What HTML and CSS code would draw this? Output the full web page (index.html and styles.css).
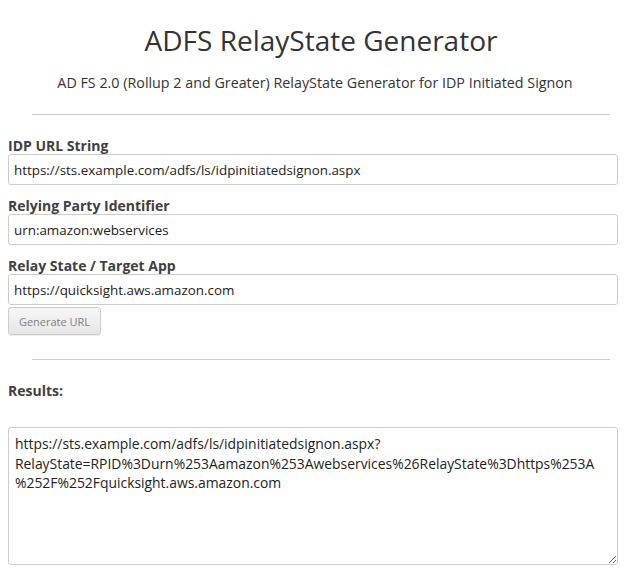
FILE: index.html
```html
<!DOCTYPE html>
<html lang="en">
<head>
<meta charset="utf-8">
<title>ADFS RelayState Generator</title>
<link rel="stylesheet" href="styles.css">
</head>
<body>
<header class="page-header">
  <h1 class="title">ADFS RelayState Generator</h1>
  <p class="subtitle">AD FS 2.0 (Rollup 2 and Greater) RelayState Generator for IDP Initiated Signon</p>
</header>
<hr class="divider">
<form class="form">
  <div class="field">
    <label class="label" for="idp">IDP URL String</label>
    <input class="input" id="idp" type="text" value="https://sts.example.com/adfs/ls/idpinitiatedsignon.aspx">
  </div>
  <div class="field">
    <label class="label" for="rp">Relying Party Identifier</label>
    <input class="input" id="rp" type="text" value="urn:amazon:webservices">
  </div>
  <div class="field field-last">
    <label class="label" for="rs">Relay State / Target App</label>
    <input class="input" id="rs" type="text" value="https://quicksight.aws.amazon.com">
  </div>
  <button class="btn" type="button">Generate URL</button>
</form>
<hr class="divider divider-results">
<section class="results">
  <label class="label results-label" for="out">Results:</label>
  <textarea class="output" id="out">https://sts.example.com/adfs/ls/idpinitiatedsignon.aspx?RelayState=RPID%3Durn%253Aamazon%253Awebservices%26RelayState%3Dhttps%253A%252F%252Fquicksight.aws.amazon.com</textarea>
</section>
</body>
</html>
```
FILE: styles.css
```css
html, body {
  background: #fff;
}
body {
  margin: 8px;
  font-family: "Open Sans", "Liberation Sans", sans-serif;
  color: #333;
}
.page-header {
  text-align: center;
  padding-top: 17px;
}
.title {
  margin: 0;
  padding-left: 16px;
  font-size: 28px;
  font-weight: 400;
  line-height: 30px;
  color: #333;
}
.subtitle {
  margin: 18px 0 0;
  padding-left: 4px;
  font-size: 14.3px;
  line-height: 20px;
  color: #333;
}
.divider {
  border: 0;
  border-top: 1px solid #ccc;
  height: 0;
  margin: 21px 8px 0 24px;
}
.form {
  display: flex;
  flex-direction: column;
  align-items: flex-start;
  padding-top: 22px;
}
.field {
  width: 100%;
  display: flex;
  flex-direction: column;
  margin-bottom: 12px;
}
.field-last {
  margin-bottom: 2px;
}
.label {
  display: block;
  font-size: 14px;
  font-weight: 700;
  line-height: 17px;
  color: #404040;
}
.input {
  box-sizing: border-box;
  width: 100%;
  height: 31px;
  margin: 0;
  padding: 0 5px;
  border: 1px solid #ccc;
  border-radius: 3px;
  font-family: "Open Sans", "Liberation Sans", sans-serif;
  font-size: 13.4px;
  color: #222;
  background: #fff;
}
.btn {
  height: 28px;
  width: 93px;
  padding: 0;
  border: 1px solid #ccc;
  border-radius: 3px;
  background: linear-gradient(#f7f7f7, #e6e6e6);
  font-family: "Open Sans", "Liberation Sans", sans-serif;
  font-size: 11px;
  color: #808080;
  box-shadow: 0 1px 1px rgba(0,0,0,0.08);
}
.divider-results {
  margin-top: 24px;
}
.results {
  padding-top: 22px;
}
.results-label {
  margin-bottom: 28px;
}
.output {
  display: block;
  box-sizing: border-box;
  width: 100%;
  height: 138px;
  margin: 0;
  padding: 6px 14px 6px 6px;
  border: 1px solid #ccc;
  border-radius: 3px;
  font-family: "Open Sans", "Liberation Sans", sans-serif;
  font-size: 13.9px;
  line-height: 19.5px;
  color: #222;
  resize: both;
}
```
